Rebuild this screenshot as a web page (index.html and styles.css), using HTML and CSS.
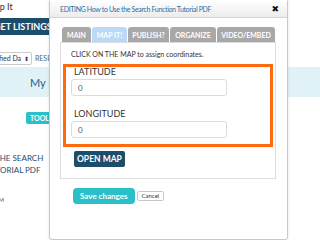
FILE: index.html
```html
<!DOCTYPE html>
<html lang="en">
<head>
  <meta charset="UTF-8" />
  <title>Edit listing - Map It</title>
  <link rel="stylesheet" href="styles.css">
</head>
<body>
  <!-- page behind the dialog -->
  <div class="page">
    <div class="page-title">Map It</div>
    <div class="listings-bar">GET LISTINGS</div>
    <div class="sort-row">
      <div class="sort-select">Modified Da <span class="arrows">&#x2B0D;</span></div>
      <span class="reset">RESET</span>
    </div>
    <div class="dash-band"><span>My Dashboard</span></div>
    <div class="tools-row"><span class="tools-btn">TOOLS</span></div>
    <div class="item-title">
      <div class="line1">THE SEARCH</div>
      <div class="line2">TUTORIAL PDF</div>
    </div>
    <div class="item-meta">PM</div>
  </div>

  <!-- edit dialog -->
  <div class="dialog">
    <div class="dialog-bar">
      <span class="dialog-title">EDITING How to Use the Search Function Tutorial PDF</span>
      <span class="close">&#x2716;</span>
    </div>
    <div class="dialog-body">
      <ul class="tabs">
        <li class="tab tab-main">MAIN</li>
        <li class="tab tab-map active">MAP IT!</li>
        <li class="tab tab-publish">PUBLISH?</li>
        <li class="tab tab-organize">ORGANIZE</li>
        <li class="tab tab-video">VIDEO/EMBED</li>
      </ul>
      <div class="panel">
        <p class="hint">CLICK ON THE MAP to assign coordinates.</p>
        <div class="coords">
          <label class="field-label">LATITUDE</label>
          <input class="field" type="text" value="0">
          <label class="field-label second">LONGITUDE</label>
          <input class="field" type="text" value="0">
        </div>
        <button class="open-map">OPEN MAP</button>
      </div>
      <div class="actions">
        <button class="save-btn">Save changes</button>
        <button class="cancel-btn">Cancel</button>
      </div>
    </div>
  </div>
</body>
</html>
```

FILE: styles.css
```css
body {
  font-family: 'Lato', 'Open Sans', sans-serif;
  margin: 0;
  padding: 0;
  width: 320px;
  height: 240px;
  overflow: hidden;
  background: #ffffff;
  color: #333;
  position: relative;
}

/* page behind */
.page {
  width: 320px;
  overflow: hidden;
}

.page-title {
  height: 14px;
  line-height: 14px;
  font-size: 9px;
  color: #333;
  margin-left: -13px;
}

.listings-bar {
  margin-top: 4px;
  height: 17px;
  line-height: 17px;
  width: 60px;
  background: #1c4d6b;
  color: #fff;
  font-weight: bold;
  font-size: 9px;
  white-space: nowrap;
  text-indent: -6px;
}

.sort-row {
  margin-top: 17px;
  height: 12px;
  display: flex;
  align-items: center;
  gap: 3px;
  margin-left: -20px;
}

.sort-select {
  height: 11px;
  line-height: 11px;
  border: 1px solid #ccc;
  border-radius: 2px;
  font-size: 7px;
  padding: 0 2px 0 2px;
  background: #fff;
  white-space: nowrap;
}

.sort-select .arrows {
  font-size: 6px;
  margin-left: 1px;
  font-family: 'DejaVu Sans', sans-serif;
}

.reset {
  font-size: 7px;
  color: #4a6b80;
}

.dash-band {
  margin-top: 3px;
  height: 30px;
  background: #e1f2f7;
  display: flex;
  align-items: center;
  padding-left: 30px;
  font-size: 11px;
  color: #1f5d8c;
  white-space: nowrap;
}

.tools-row {
  margin-top: 15px;
  height: 12px;
  display: flex;
  padding-left: 26px;
}

.tools-btn {
  height: 12px;
  line-height: 12px;
  padding: 0 4px;
  background: #2bc0c9;
  color: #fff;
  font-weight: bold;
  font-size: 7px;
  border-radius: 2px;
}

.item-title {
  margin-top: 28px;
  font-size: 8px;
  line-height: 12px;
  color: #1d4e6c;
  white-space: nowrap;
}

.item-title .line1 {
  margin-left: -5px;
}

.item-title .line2 {
  margin-left: -15px;
}

.item-meta {
  margin-top: 20px;
  margin-left: -5px;
  font-size: 6px;
  color: #555;
}

/* dialog */
.dialog {
  position: absolute;
  left: 49px;
  top: -1px;
  width: 237px;
  height: 239px;
  background: #fff;
  border: 1px solid #a9d5e2;
  border-radius: 3px;
  box-shadow: 0 0 3px rgba(0, 0, 0, 0.12);
}

.dialog-bar {
  height: 17px;
  display: flex;
  align-items: center;
  justify-content: space-between;
  padding: 0 8px 0 10px;
  background: linear-gradient(#ffffff, #ececec);
  border-bottom: 1px solid #d4d4d4;
}

.dialog-title {
  font-size: 7px;
  color: #2e6fa8;
  letter-spacing: -0.35px;
  white-space: nowrap;
}

.close {
  font-size: 9px;
  color: #111;
  font-family: 'DejaVu Sans', sans-serif;
}

.dialog-body {
  padding: 9px 10px 0 10px;
}

.tabs {
  list-style: none;
  margin: 0 0 0 2px;
  padding: 0;
  display: flex;
  gap: 1px;
}

.tab {
  flex-shrink: 0;
  height: 15px;
  line-height: 16px;
  text-align: center;
  white-space: nowrap;
  background: #a8a8a8;
  color: #fff;
  font-size: 7px;
  font-weight: bold;
  border-radius: 3px 3px 0 0;
}

.tab-main { width: 29px; }
.tab-map { width: 35px; }
.tab-publish { width: 41px; }
.tab-organize { width: 46px; }
.tab-video { width: 58px; }

.tab.active {
  background: #b9d9f7;
}

.panel {
  border: 1px solid #dddddd;
  padding: 7px 2px 11px 2px;
  width: 210px;
}

.hint {
  margin: 0 0 5px 8px;
  font-size: 7px;
  line-height: 9px;
  color: #333;
  white-space: nowrap;
}

.coords {
  border: 3px solid #ff6a0e;
  padding: 0 0 6px 5px;
  display: flex;
  flex-direction: column;
  align-items: flex-start;
}

.field-label {
  font-size: 9px;
  line-height: 10px;
  color: #333;
  margin: 0 0 0 3px;
}

.field-label.second {
  margin-top: 13px;
}

.field {
  width: 156px;
  height: 17px;
  box-sizing: border-box;
  border: 1px solid #dcdcdc;
  border-radius: 3px;
  padding: 0 6px;
  font-family: 'Lato', sans-serif;
  font-size: 8px;
  color: #555;
  margin-top: 2px;
}

.open-map {
  display: block;
  margin: 4px 0 0 11px;
  height: 16px;
  padding: 0 3px;
  border: none;
  border-radius: 2px;
  background: #1c4d6b;
  color: #fff;
  font-family: 'Lato', sans-serif;
  font-weight: bold;
  font-size: 8.5px;
}

.actions {
  margin-top: 9px;
  display: flex;
  align-items: center;
  gap: 2px;
  padding-left: 13px;
}

.save-btn {
  height: 16px;
  padding: 0 7px;
  border: none;
  border-radius: 4px;
  background: #2bbfca;
  color: #fff;
  font-family: 'Lato', sans-serif;
  font-weight: bold;
  font-size: 8px;
}

.cancel-btn {
  height: 10px;
  padding: 0 4px;
  border: 1px solid #c8c8c8;
  border-radius: 2px;
  background: #fff;
  color: #333;
  font-family: 'Lato', sans-serif;
  font-size: 6px;
  line-height: 8px;
}
```
